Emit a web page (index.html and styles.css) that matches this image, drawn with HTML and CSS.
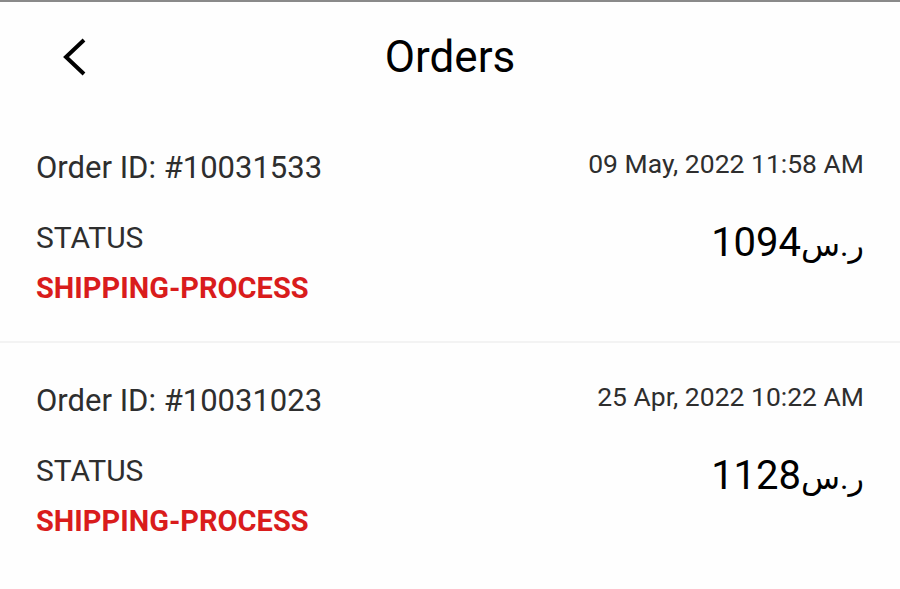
FILE: index.html
```html
<!DOCTYPE html>
<html lang="en">
<head>
<meta charset="utf-8">
<title>Orders</title>
<link rel="stylesheet" href="styles.css">
</head>
<body>
<div class="app">
  <header class="topbar">
    <button class="back" aria-label="Back">
      <svg width="26" height="38" viewBox="0 0 26 38"><polyline points="22,2 4,19 22,36" fill="none" stroke="#000" stroke-width="4" stroke-linejoin="miter"/></svg>
    </button>
    <h1 class="title">Orders</h1>
    <span class="spacer"></span>
  </header>
  <section class="order">
    <div class="row">
      <span class="order-id">Order ID: #10031533</span>
      <span class="date">09 May, 2022 11:58 AM</span>
    </div>
    <div class="row row-bottom">
      <div class="status">
        <span class="status-label">STATUS</span>
        <span class="status-value">SHIPPING-PROCESS</span>
      </div>
      <span class="price">1094<span class="currency">ر.س</span></span>
    </div>
  </section>
  <section class="order">
    <div class="row">
      <span class="order-id">Order ID: #10031023</span>
      <span class="date">25 Apr, 2022 10:22 AM</span>
    </div>
    <div class="row row-bottom">
      <div class="status">
        <span class="status-label">STATUS</span>
        <span class="status-value">SHIPPING-PROCESS</span>
      </div>
      <span class="price">1128<span class="currency">ر.س</span></span>
    </div>
  </section>
</div>
</body>
</html>
```
FILE: styles.css
```css
html, body {
  margin: 0;
  padding: 0;
  background: #fefefe;
}
body {
  font-family: Roboto, "DejaVu Sans", sans-serif;
  color: #2e2e2e;
}
.app {
  border-top: 2px solid #8a8a8a;
  height: 587px;
  overflow: hidden;
}
.topbar {
  height: 110px;
  display: grid;
  grid-template-columns: 1fr auto 1fr;
  align-items: center;
  padding: 0 0 0 62px;
  box-sizing: border-box;
}
.back {
  justify-self: start;
  background: none;
  border: 0;
  padding: 0;
  margin: 0;
  display: flex;
}
.title {
  margin: 0;
  font-weight: 400;
  font-size: 44px;
  color: #000;
  transform: translateX(-31px);
}
.order {
  padding: 38px 36px 0 36px;
  height: 231px;
  box-sizing: border-box;
  border-bottom: 2px solid #f3f3f3;
}
.order + .order {
  border-bottom: 0;
  padding-top: 40px;
}
.row {
  display: flex;
  justify-content: space-between;
  align-items: baseline;
}
.order-id {
  font-size: 31px;
  line-height: 36px;
}
.date {
  font-size: 26.5px;
  line-height: 36px;
  position: relative;
  top: -5px;
}
.row-bottom {
  margin-top: 33px;
  align-items: flex-start;
}
.status {
  display: flex;
  flex-direction: column;
}
.status-label {
  font-size: 30px;
  line-height: 36px;
}
.status-value {
  font-size: 29px;
  line-height: 34px;
  font-weight: 700;
  color: #d91c1c;
  margin-top: 15px;
}
.price {
  font-size: 40px;
  line-height: 48px;
  color: #000;
  margin-top: -1px;
}
.currency {
  font-size: 32px;
}
```
